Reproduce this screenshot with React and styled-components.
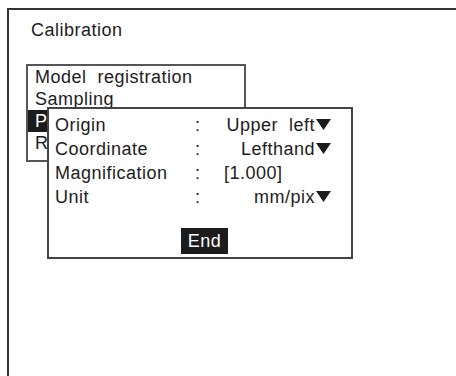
import React from 'react';
import styled, { createGlobalStyle } from 'styled-components';

const GlobalStyle = createGlobalStyle`
  html, body {
    margin: 0;
    padding: 0;
    background: #fff;
  }
  body {
    font-family: "Liberation Sans", Arial, sans-serif;
    color: #1c1c1c;
  }
`;

const Page = styled.div`
  width: 456px;
  height: 376px;
  overflow: hidden;
  background: #fff;
`;

const Screen = styled.div`
  position: relative;
  margin: 8px 0 0 7px;
  width: 470px;
  height: 400px;
  border-top: 2px solid #333;
  border-left: 2px solid #333;
  padding: 10px 0 0 17px;
  box-sizing: border-box;
`;

const Title = styled.div`
  margin-left: 5px;
  font-size: 18px;
  line-height: 20px;
  letter-spacing: 0.5px;
`;

const Menu = styled.div`
  margin-top: 24px;
  width: 220px;
  height: 98px;
  box-sizing: border-box;
  border: 2px solid #555;
`;

const MenuItem = styled.div`
  height: 22px;
  padding-left: 7px;
  font-size: 18px;
  line-height: 22px;
  letter-spacing: 0.5px;
  white-space: pre;
  background: ${(p) => (p.$active ? '#1c1c1c' : 'transparent')};
  color: ${(p) => (p.$active ? '#fff' : '#1c1c1c')};
`;

const Popup = styled.div`
  position: absolute;
  left: 38px;
  top: 97px;
  width: 306px;
  height: 152px;
  box-sizing: border-box;
  border: 2px solid #444;
  background: #fff;
  padding: 4px 0 0 6px;
  display: flex;
  flex-direction: column;
`;

const Fields = styled.div`
  display: grid;
  grid-template-columns: 140px 29px 107px;
  grid-auto-rows: 24px;
  font-size: 18px;
  line-height: 24px;
  letter-spacing: 0.5px;
`;

const Label = styled.div`
  white-space: nowrap;
`;

const Colon = styled.div``;

const Value = styled.div`
  display: flex;
  align-items: center;
  justify-content: ${(p) => (p.$left ? 'flex-start' : 'flex-end')};
  white-space: pre;
`;

const Arrow = styled.svg`
  width: 15px;
  height: 11px;
  margin-left: 1px;
  margin-top: -1px;
  flex: none;
`;

const Footer = styled.div`
  display: flex;
  justify-content: center;
  margin-top: 19px;
`;

const EndButton = styled.div`
  width: 47px;
  height: 26px;
  box-sizing: border-box;
  background: #1c1c1c;
  color: #fff;
  font-size: 18px;
  line-height: 27px;
  letter-spacing: 0.5px;
  text-align: center;
  margin-left: 3px;
`;

function Down() {
  return (
    <Arrow viewBox="0 0 15 11">
      <polygon points="0,0 15,0 7.5,11" fill="#1c1c1c" />
    </Arrow>
  );
}

const rows = [
  { label: 'Origin', value: 'Upper  left', arrow: true },
  { label: 'Coordinate', value: 'Lefthand', arrow: true },
  { label: 'Magnification', value: '[1.000]', left: true },
  { label: 'Unit', value: 'mm/pix', arrow: true },
];

export default function App() {
  return (
    <Page>
      <GlobalStyle />
      <Screen>
        <Title>Calibration</Title>
        <Menu>
          <MenuItem>Model  registration</MenuItem>
          <MenuItem>Sampling</MenuItem>
          <MenuItem $active>P</MenuItem>
          <MenuItem>R</MenuItem>
        </Menu>
        <Popup>
          <Fields>
            {rows.map((r) => (
              <React.Fragment key={r.label}>
                <Label>{r.label}</Label>
                <Colon>:</Colon>
                <Value $left={r.left}>
                  {r.value}
                  {r.arrow && <Down />}
                </Value>
              </React.Fragment>
            ))}
          </Fields>
          <Footer>
            <EndButton>End</EndButton>
          </Footer>
        </Popup>
      </Screen>
    </Page>
  );
}
